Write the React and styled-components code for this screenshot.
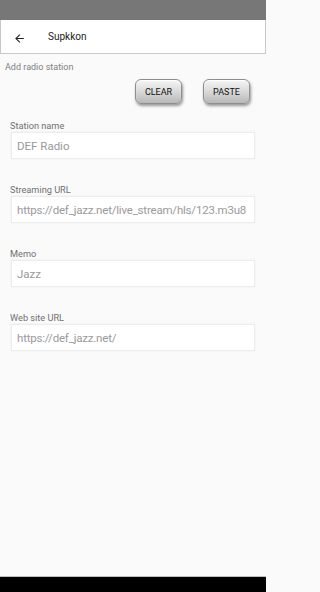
import React from 'react';
import styled, { createGlobalStyle } from 'styled-components';

const GlobalStyle = createGlobalStyle`
  html, body {
    margin: 0;
    padding: 0;
    background: #fafafa;
    font-family: Roboto, "Liberation Sans", sans-serif;
  }
`;

const Screen = styled.div`
  display: flex;
  flex-direction: column;
  width: 266px;
  height: 592px;
  overflow: hidden;
  background: #fafafa;
`;

const StatusBar = styled.div`
  height: 20px;
  background: #777777;
  flex-shrink: 0;
`;

const AppBar = styled.div`
  height: 33px;
  background: #ffffff;
  border: 1px solid #c8c8c8;
  border-top: none;
  display: flex;
  align-items: center;
  padding-left: 12px;
  gap: 22px;
  flex-shrink: 0;

  h1 {
    margin: 0;
    font-size: 10px;
    font-weight: 400;
    color: #1a1a1a;
  }
`;

const BackIcon = styled.svg`
  width: 13px;
  height: 13px;
  margin-top: 3px;
`;

const Content = styled.main`
  flex: 1;
  padding: 8px 11px 0 10px;
`;

const Caption = styled.div`
  font-size: 9px;
  color: #808080;
  margin-left: -5px;
`;

const ButtonRow = styled.div`
  display: flex;
  justify-content: flex-end;
  gap: 21px;
  margin: 7px 5px 16px 0;
`;

const PillButton = styled.button`
  width: 47px;
  height: 25px;
  border: 1px solid #8e8e8e;
  border-radius: 6px;
  background: linear-gradient(#f6f6f6, #dcdcdc 45%, #b8b8b8);
  box-shadow: 1px 2px 3px rgba(0, 0, 0, 0.4), inset 0 1px 1px #fff;
  font-family: Roboto, "Liberation Sans", sans-serif;
  font-size: 9px;
  font-weight: 400;
  color: #111;
  padding: 0;
`;

const Field = styled.div`
  display: flex;
  flex-direction: column;
  gap: 1px;
  margin-bottom: 25px;
`;

const Label = styled.label`
  font-size: 9.2px;
  color: #707070;
  line-height: 11px;
`;

const Input = styled.div`
  height: 25px;
  margin-left: 1px;
  background: #ffffff;
  border: 1px solid #ececec;
  box-shadow: 0 0 2px rgba(0, 0, 0, 0.06);
  display: flex;
  align-items: center;
  padding: 0 6px 0 5px;
  font-size: 11.5px;
  color: #9a9a9a;
`;

const Value = styled.span`
  flex: 1;
  white-space: nowrap;
  overflow: hidden;
  letter-spacing: ${p => (p.$url ? '-0.2px' : '0')};
`;

const NavBar = styled.div`
  height: 15px;
  background: #000;
  border-top: 1px solid #c0c0c0;
  flex-shrink: 0;
`;

const fields = [
  { label: 'Station name', value: 'DEF Radio' },
  { label: 'Streaming URL', value: 'https://def_jazz.net/live_stream/hls/123.m3u8', url: true },
  { label: 'Memo', value: 'Jazz' },
  { label: 'Web site URL', value: 'https://def_jazz.net/', url: true },
];

export default function App() {
  return (
    <>
      <GlobalStyle />
      <Screen>
        <StatusBar />
        <AppBar>
          <BackIcon viewBox="0 0 24 24">
            <path d="M20 11H7.83l5.59-5.59L12 4l-8 8 8 8 1.41-1.41L7.83 13H20v-2z" fill="#222" />
          </BackIcon>
          <h1>Supkkon</h1>
        </AppBar>
        <Content>
          <Caption>Add radio station</Caption>
          <ButtonRow>
            <PillButton>CLEAR</PillButton>
            <PillButton>PASTE</PillButton>
          </ButtonRow>
          {fields.map(f => (
            <Field key={f.label}>
              <Label>{f.label}</Label>
              <Input>
                <Value $url={f.url}>{f.value}</Value>
              </Input>
            </Field>
          ))}
        </Content>
        <NavBar />
      </Screen>
    </>
  );
}
